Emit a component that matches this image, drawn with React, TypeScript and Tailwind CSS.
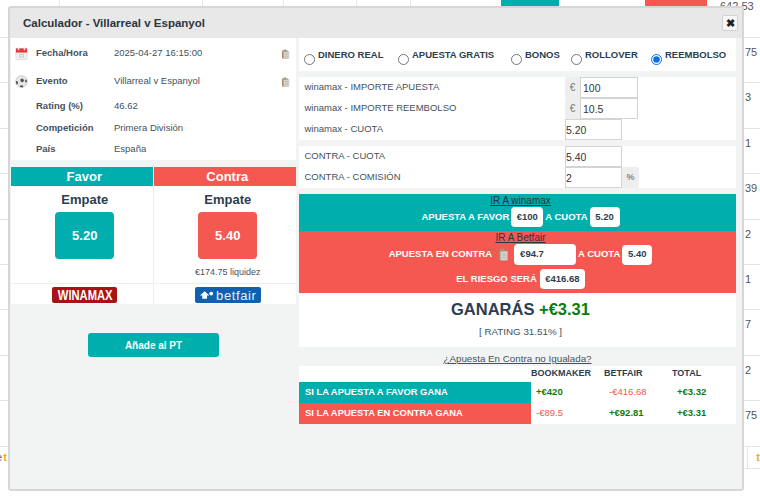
import React from 'react';

const FONT = "font-['Liberation_Sans',Arial,sans-serif]";

const Clipboard = ({ className }: { className: string }) => (
  <svg viewBox="0 0 16 20" className={className}>
    <rect x="1" y="3" width="12" height="16" rx="1" fill="#b5835a" />
    <rect x="4" y="5" width="11" height="14" fill="#d4d4d0" stroke="#b0b0aa" strokeWidth="0.6" />
    <rect x="4" y="1" width="6" height="4" rx="1" fill="#9a9a94" />
    <path d="M6 9h7M6 12h7M6 15h7" stroke="#a5a5a0" strokeWidth="0.8" />
  </svg>
);

const CalendarIcon = () => (
  <svg viewBox="0 0 14 14" className="w-[13px] h-[13px]">
    <rect x="1" y="1.5" width="12" height="12" rx="1" fill="#f2f2f2" stroke="#c9c9c9" strokeWidth="0.6" />
    <rect x="1" y="1.5" width="12" height="4.5" fill="#e2383f" />
    <rect x="3" y="0.5" width="1.6" height="3" fill="#f7d5d5" />
    <rect x="9.4" y="0.5" width="1.6" height="3" fill="#f7d5d5" />
    <path d="M5 8h4v3H5z" fill="none" stroke="#c7a9a9" strokeWidth="0.7" />
  </svg>
);

const BallIcon = () => (
  <svg viewBox="0 0 14 14" className="w-[13px] h-[13px]">
    <circle cx="7" cy="7" r="6.3" fill="#e6e6e6" stroke="#a8a8a8" strokeWidth="0.5" />
    <path d="M6 4.4l2.4-.5 1.4 2-1.5 1.9-2.3-.7z" fill="#4a4e54" />
    <path d="M1 6.5l2 .5.3 2.4-1.4.8A6 6 0 0 1 1 6.5zM6 11l2.4.2.6 1.6a6 6 0 0 1-3.6 0zM12 4.5l1 2.5-1.4 1-1-1.8z" fill="#4a4e54" />
  </svg>
);

const bgRows = ['75', '3', '1', '39', '2', '1', '7', '2', '75'];

// table behind the dialog, only its edges stay visible
const BackgroundTable = () => (
  <div className="w-[760px] h-[499px] overflow-hidden bg-white text-[11px] text-[#555]">
    <div className="h-[38px] border-b border-[#e4e4e4] flex">
      <div className="w-[60px] h-[8px] border-r border-[#e4e4e4]" />
      <div className="w-[143px] h-[8px] border-r border-[#e4e4e4]" />
      <div className="w-[81px] h-[8px] border-r border-[#e4e4e4]" />
      <div className="w-[73px] h-[8px] border-r border-[#e4e4e4]" />
      <div className="w-[54px] h-[8px] border-r border-[#e4e4e4]" />
      <div className="w-[90px]" />
      <div className="w-[58px] h-[6px] bg-[#00aeae]" />
      <div className="w-[86px]" />
      <div className="w-[62px] h-[6px] bg-[#f55850]" />
      <div className="ml-[13px] leading-[12px] text-[11px]">642.53</div>
    </div>
    {bgRows.map((value, i) => (
      <div key={i} className="h-[45.4px] border-b border-[#e4e4e4] pl-[745px] pt-[7px] leading-[14px]">{value}</div>
    ))}
    <div className="h-[22px] flex items-center">
      <div className="w-[8px] shrink-0 flex items-center">
        <span className="-ml-[4px] text-[#667]">e</span>
        <span className="ml-[1px] text-[#f5a623] font-bold">t</span>
      </div>
      <div className="ml-[737px] w-[15px] h-full shrink-0 flex items-center border-b border-[#e4e4e4]">
        <div className="w-[6px] h-full border-r border-[#e4e4e4]" />
        <span className="ml-[8px] text-[#f5a623] font-bold">t</span>
      </div>
    </div>
  </div>
);

const DetailRow = ({ label, value, icon, copy, h }: { label: string; value: string; icon?: React.ReactNode; copy?: boolean; h: string }) => (
  <div className={`flex items-center ${h}`}>
    <div className="w-[25px] pl-[4px] flex items-center">{icon}</div>
    <div className="w-[78px] font-bold text-[#44515e]">{label}</div>
    <div className="flex-1">{value}</div>
    {copy && <Clipboard className="w-[9px] h-[10px] mr-[6px] mt-[1px]" />}
  </div>
);

const MoneyRow = ({ label, value, euro, pct, narrow }: { label: string; value: string; euro?: boolean; pct?: boolean; narrow?: boolean }) => (
  <div className="flex items-center h-[21px]">
    <div className="w-[266px] pl-[5.5px] text-[#44515e]">{label}</div>
    <div className="flex h-[20.5px]">
      {euro && <div className="w-[15px] bg-[#eeeeee] flex items-center justify-center text-[#777] text-[10px] rounded-l-[2px]">€</div>}
      <input
        readOnly
        value={value}
        className={`${narrow ? 'w-[57px] pl-0' : 'w-[58px] pl-[2px]'} h-full border border-[#d4d4d4] text-[10.5px] text-[#333] bg-white outline-none`}
      />
      {pct && <div className="w-[17px] bg-[#eeeeee] flex items-center justify-center text-[#888] text-[9px] font-bold rounded-r-[2px]">%</div>}
    </div>
  </div>
);

const Pill = ({ children, className }: { children: React.ReactNode; className: string }) => (
  <span className={`inline-flex items-center justify-center bg-white rounded-[4px] text-[#2c3e50] font-bold ${className}`}>{children}</span>
);

const Radio = ({ label, checked, className }: { label: string; checked?: boolean; className: string }) => (
  <label className={`flex items-start gap-[3px] ${className}`}>
    <input type="radio" name="tipo" defaultChecked={checked} className="w-[11px] h-[11px] m-0 mt-[5px] accent-[#0b6fe8]" />
    <span className="font-bold leading-[12px] text-[#2c3e50]">{label}</span>
  </label>
);

const ResultRow = ({ label, color, values }: { label: string; color: string; values: { t: string; up: boolean }[] }) => (
  <div className="grid grid-cols-[232px_73px_68px_64px] h-[21px] items-center">
    <div className={`${color} h-full flex items-center pl-[6px] text-white font-bold text-[9.4px]`}>{label}</div>
    {values.map((v, i) => (
      <div key={i} className={`pl-[5px] text-[9.5px] ${v.up ? 'text-[#0a7d0a] font-semibold' : 'text-[#f55850]'}`}>{v.t}</div>
    ))}
  </div>
);

export default function App() {
  return (
    <div className={`relative w-[760px] h-[499px] overflow-hidden ${FONT}`}>
      <BackgroundTable />

      <div className="absolute left-[8px] top-[6px] w-[736px] h-[485px] border-2 border-[#d6d6d6] rounded-[3px] bg-[#f2f4f4] text-[9.5px] text-[#44515e]">
        <div className="h-[30px] bg-[#e8e8e8] flex items-center justify-between pl-[13px] pr-[4px]">
          <h3 className="text-[11.5px] font-bold text-[#2c3440] mt-px">Calculador - Villarreal v Espanyol</h3>
          <button className="w-[16px] h-[16px] bg-[#f7f7f7] border border-[#d2d2d2] rounded-[2px] flex items-center justify-center text-[#222] text-[11px] font-bold leading-none">✖</button>
        </div>

        <div className="flex pl-px">
          {/* left column */}
          <div className="w-[285px] mr-[3px]">
            <div className="bg-white h-[122px] pt-[0.5px]">
              <DetailRow h="h-[29px]" label="Fecha/Hora" value="2025-04-27 16:15:00" icon={<CalendarIcon />} copy />
              <DetailRow h="h-[28px]" label="Evento" value="Villarreal v Espanyol" icon={<BallIcon />} copy />
              <DetailRow h="h-[22px]" label="Rating (%)" value="46.62" />
              <DetailRow h="h-[21px]" label="Competición" value="Primera División" />
              <DetailRow h="h-[21.5px]" label="País" value="España" />
            </div>

            <div className="mt-[7px] bg-white grid grid-cols-2 text-center">
              <div className="h-[19px] bg-[#00aeae] text-white font-bold text-[13px] leading-[19px] mr-px pl-[5px]">Favor</div>
              <div className="h-[19px] bg-[#f55850] text-white font-bold text-[13px] leading-[19px] pl-[5px]">Contra</div>

              <div className="h-[98px] border-r border-b border-[#eeeeee] flex flex-col items-center pt-[6px] pl-[6px]">
                <div className="text-[13px] font-bold leading-[16px] text-[#2c3e50]">Empate</div>
                <div className="mt-[4px] w-[59px] h-[47px] bg-[#00aeae] rounded-[4px] flex items-center justify-center text-white font-bold text-[13px]">5.20</div>
              </div>
              <div className="h-[98px] border-b border-[#eeeeee] flex flex-col items-center pt-[6px] pl-[6px]">
                <div className="text-[13px] font-bold leading-[16px] text-[#2c3e50]">Empate</div>
                <div className="mt-[4px] w-[59px] h-[47px] bg-[#f55850] rounded-[4px] flex items-center justify-center text-white font-bold text-[13px]">5.40</div>
                <div className="mt-[7px] text-[9px] font-medium text-[#44515e]">€174.75 liquidez</div>
              </div>

              <div className="h-[20px] border-r border-[#eeeeee] flex items-center justify-center pl-[6px] pt-[2px]">
                <div className="w-[65px] h-[16px] bg-[#a81414] rounded-[2px] flex items-center justify-center text-white font-bold text-[14px] leading-none overflow-hidden">
                  <span className="inline-block scale-x-[0.8]">WINAMAX</span>
                </div>
              </div>
              <div className="h-[20px] flex items-center justify-center pl-[6px] pt-[2px]">
                <div className="w-[66px] h-[16px] bg-[#1160b0] rounded-[2px] flex items-center justify-center gap-[2px] text-[#e8f0f8] text-[13px] tracking-[0.6px] leading-none">
                  <svg viewBox="0 0 16 10" className="w-[15px] h-[10px]">
                    <path d="M1 5.5 6 1l5 4.5H8.5V9h-5V5.5z" fill="#fff" />
                    <circle cx="13" cy="3.5" r="2" fill="#fff" />
                  </svg>
                  <span>betfair</span>
                </div>
              </div>
            </div>

            <div className="mt-[29px] flex justify-center">
              <button className="w-[131px] h-[24px] bg-[#00aeae] rounded-[3px] text-white font-bold text-[10px]">Añade al PT</button>
            </div>
          </div>

          {/* right column */}
          <div className="w-[437px]">
            <div className="h-[33px] bg-white flex items-end pb-[6px] pl-[5px]">
              <Radio className="w-[94px]" label="DINERO REAL" />
              <Radio className="w-[113px]" label="APUESTA GRATIS" />
              <Radio className="w-[60px]" label="BONOS" />
              <Radio className="w-[80px]" label="ROLLOVER" />
              <Radio className="w-[85px]" label="REEMBOLSO" checked />
            </div>

            <div className="mt-[6px] h-[63px] bg-white">
              <MoneyRow label="winamax - IMPORTE APUESTA" value="100" euro />
              <MoneyRow label="winamax - IMPORTE REEMBOLSO" value="10.5" euro />
              <MoneyRow label="winamax - CUOTA" value="5.20" narrow />
            </div>

            <div className="mt-[6px] h-[42px] bg-white">
              <MoneyRow label="CONTRA - CUOTA" value="5.40" narrow />
              <MoneyRow label="CONTRA - COMISIÓN" value="2" narrow pct />
            </div>

            <div className="mt-[6px] h-[37px] bg-[#00aeae] text-center text-white font-bold pl-[6px]">
              <a className="block leading-[13px] font-normal text-[#2c3440] underline text-[10px]">IR A winamax</a>
              <div className="flex items-center justify-center gap-[2px] h-[20px]">
                <span>APUESTA A FAVOR</span>
                <Pill className="w-[32px] h-[20px]">€100</Pill>
                <span>A CUOTA</span>
                <Pill className="w-[30px] h-[20px]">5.20</Pill>
              </div>
            </div>

            <div className="h-[62px] bg-[#f55850] text-center text-white font-bold pl-[6px]">
              <a className="block leading-[13px] font-normal text-[#2c3440] underline text-[10px]">IR A Betfair</a>
              <div className="flex items-center justify-center gap-[2px] h-[21px]">
                <span>APUESTA EN CONTRA</span>
                <Clipboard className="w-[12px] h-[13px] mx-[3px]" />
                <Pill className="w-[62px] h-[21px] !justify-start pl-[6px]">€94.7</Pill>
                <span>A CUOTA</span>
                <Pill className="w-[30px] h-[20px]">5.40</Pill>
              </div>
              <div className="flex items-center justify-center gap-[3px] h-[20px] mt-[4px]">
                <span>EL RIESGO SERÁ</span>
                <Pill className="w-[45px] h-[20px]">€416.68</Pill>
              </div>
            </div>

            <div className="h-[54px] bg-white text-center pt-[5px] pl-[6px]">
              <div className="text-[16.5px] font-bold leading-[22px] text-[#2c3e50]">
                GANARÁS <span className="text-[#0a7d0a]">+€3.31</span>
              </div>
              <div className="mt-[5px] text-[9.8px] text-[#44515e]">[ RATING 31.51% ]</div>
            </div>

            <div className="h-[19px] text-center text-[9.8px] leading-[23px] underline text-[#44515e]">¿Apuesta En Contra no Igualada?</div>

            <div className="bg-white">
              <div className="grid grid-cols-[232px_73px_68px_64px] h-[16px] items-center font-bold text-[9px] text-[#2c3e50]">
                <div />
                <div>BOOKMAKER</div>
                <div>BETFAIR</div>
                <div>TOTAL</div>
              </div>
              <ResultRow
                label="SI LA APUESTA A FAVOR GANA"
                color="bg-[#00aeae]"
                values={[{ t: '+€420', up: true }, { t: '-€416.68', up: false }, { t: '+€3.32', up: true }]}
              />
              <ResultRow
                label="SI LA APUESTA EN CONTRA GANA"
                color="bg-[#f55850]"
                values={[{ t: '-€89.5', up: false }, { t: '+€92.81', up: true }, { t: '+€3.31', up: true }]}
              />
            </div>
          </div>
        </div>
      </div>
    </div>
  );
}
